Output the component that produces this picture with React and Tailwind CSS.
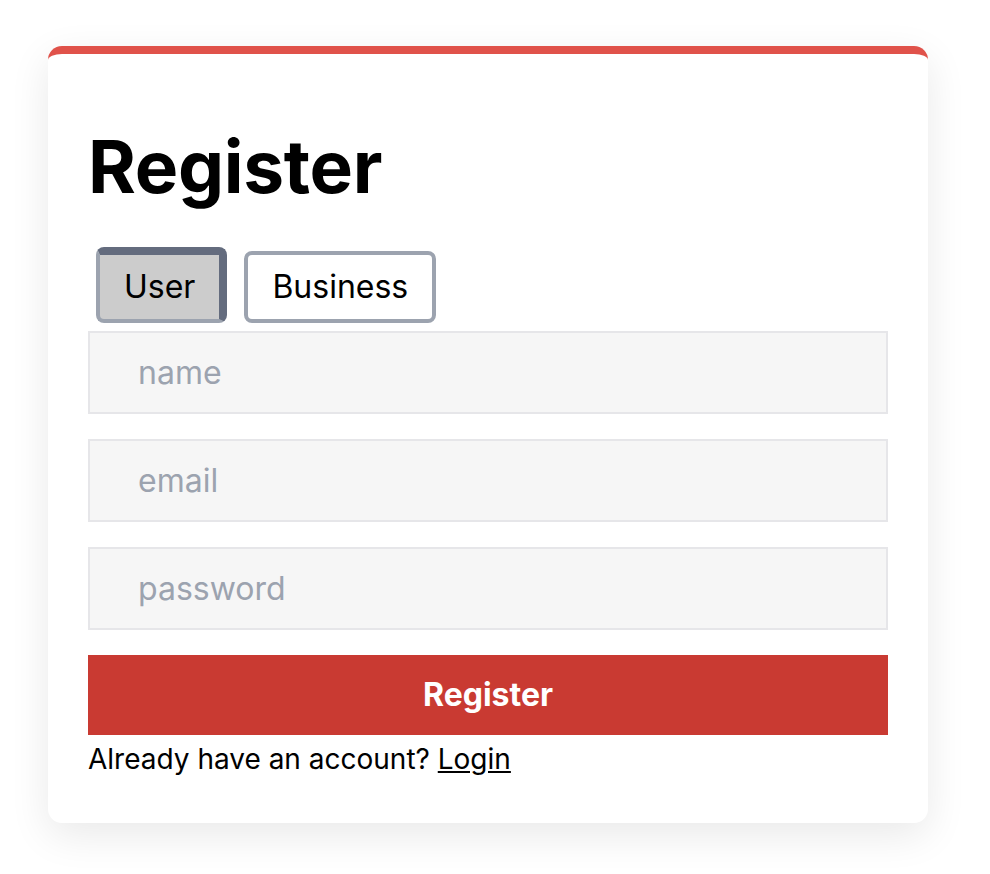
import React, { useState } from "react";

const fields = ["name", "email", "password"];

const Register = () => {
  const [tab, setTab] = useState("user");

  return (
    <div className="min-h-screen bg-white pt-[46px] pl-[48px] font-['Inter','Liberation_Sans',sans-serif] text-black">
      {/* Card */}
      <div className="w-[880px] rounded-[14px] border-t-[8px] border-[#e0524a] bg-white px-10 pt-[76px] pb-[46px] shadow-[0_12px_40px_rgba(0,0,0,0.09)]">
        <h1 className="text-[73px] font-bold leading-none tracking-[-0.3px]">Register</h1>

        {/* Account type tabs */}
        <div className="mt-[44px] flex items-end gap-[17px] pl-2">
          <button
            onClick={() => setTab("user")}
            className={`rounded-lg px-6 text-[32px] leading-none ${
              tab === "user"
                ? "h-[76px] border-t-[8px] border-r-[8px] border-b-4 border-l-4 border-t-[#646c7e] border-r-[#646c7e] border-b-[#9ca3af] border-l-[#9ca3af] bg-[#cccccc]"
                : "h-[72px] border-4 border-[#9ca3af] bg-white"
            }`}
          >
            User
          </button>
          <button
            onClick={() => setTab("business")}
            className={`rounded-lg px-6 text-[32px] leading-none ${
              tab === "business"
                ? "h-[76px] border-t-[8px] border-r-[8px] border-b-4 border-l-4 border-t-[#646c7e] border-r-[#646c7e] border-b-[#9ca3af] border-l-[#9ca3af] bg-[#cccccc]"
                : "h-[72px] border-4 border-[#9ca3af] bg-white"
            }`}
          >
            Business
          </button>
        </div>

        {/* Inputs */}
        <form className="mt-2 flex flex-col gap-[25px]" onSubmit={(e) => e.preventDefault()}>
          {fields.map((f) => (
            <input
              key={f}
              type={f === "password" ? "password" : "text"}
              placeholder={f}
              className="h-[83px] w-full border-2 border-[#e6e6e9] bg-[#f6f6f6] pl-[48px] text-[32px] outline-none placeholder:text-[#9ca3af]"
            />
          ))}
          <button
            type="submit"
            className="h-[80px] w-full bg-[#c93a32] text-[32px] font-bold text-white"
          >
            Register
          </button>
        </form>

        <p className="mt-[6px] text-[28px] leading-[36px]">
          Already have an account? <a href="#" className="underline">Login</a>
        </p>
      </div>
    </div>
  );
};

export default Register;
